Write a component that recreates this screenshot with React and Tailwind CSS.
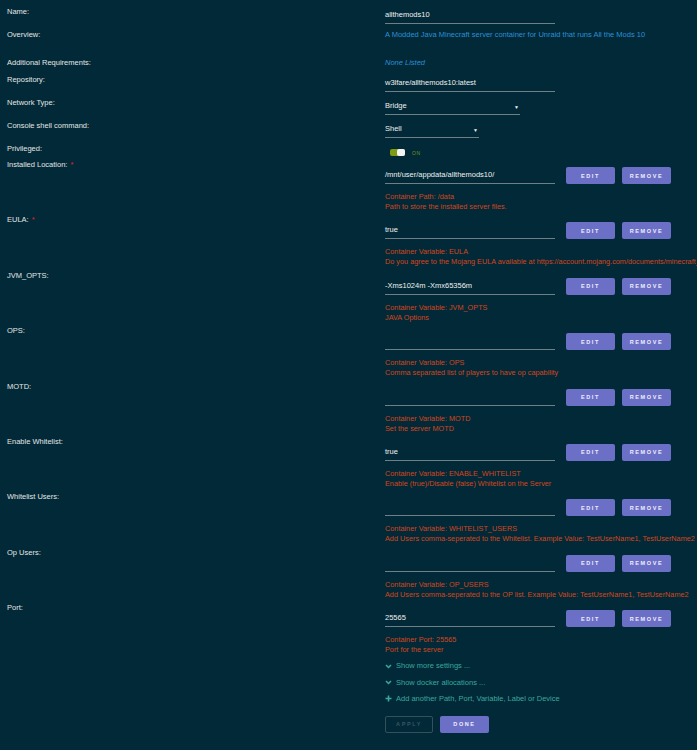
import React from 'react';

const font = { fontFamily: '"Liberation Sans", Arial, sans-serif' };

const variables = [
  {
    label: 'Installed Location:',
    required: true,
    value: '/mnt/user/appdata/allthemods10/',
    info: 'Container Path: /data',
    desc: 'Path to store the installed server files.',
  },
  {
    label: 'EULA:',
    required: true,
    value: 'true',
    info: 'Container Variable: EULA',
    desc: 'Do you agree to the Mojang EULA available at https://account.mojang.com/documents/minecraft_eula',
  },
  {
    label: 'JVM_OPTS:',
    value: '-Xms1024m -Xmx65356m',
    info: 'Container Variable: JVM_OPTS',
    desc: 'JAVA Options',
  },
  {
    label: 'OPS:',
    value: '',
    info: 'Container Variable: OPS',
    desc: 'Comma separated list of players to have op capability',
  },
  {
    label: 'MOTD:',
    value: '',
    info: 'Container Variable: MOTD',
    desc: 'Set the server MOTD',
  },
  {
    label: 'Enable Whitelist:',
    value: 'true',
    info: 'Container Variable: ENABLE_WHITELIST',
    desc: 'Enable (true)/Disable (false) Whitelist on the Server',
  },
  {
    label: 'Whitelist Users:',
    value: '',
    info: 'Container Variable: WHITELIST_USERS',
    desc: 'Add Users comma-seperated to the Whitelist. Example Value: TestUserName1, TestUserName2',
  },
  {
    label: 'Op Users:',
    value: '',
    info: 'Container Variable: OP_USERS',
    desc: 'Add Users comma-seperated to the OP list. Example Value: TestUserName1, TestUserName2',
  },
  {
    label: 'Port:',
    value: '25565',
    info: 'Container Port: 25565',
    desc: 'Port for the server',
  },
];

const Label = ({ children, required }) => (
  <div className="w-[385px] shrink-0 pl-[7px] text-[#e4e6e6]">
    {children}
    {required && <span className="ml-[3px] text-[#e0202a]">*</span>}
  </div>
);

const SmallButton = ({ children }) => (
  <button className="h-[17px] w-[49px] rounded-[2px] bg-[#6c6fc6] text-[5.5px] font-bold tracking-[1.6px] text-[#eef0ff]">
    {children}
  </button>
);

const SimpleRow = ({ label, value, width = 'w-[170px]', select, height }) => (
  <div className={`flex ${height}`}>
    <Label>{label}</Label>
    <div className={`relative mt-[3px] h-[14px] ${width} border-b border-[#6f7f86] text-[#eef0f0]`}>
      {value}
      {select && <span className="absolute right-[1px] top-[1px] text-[5px] text-[#eef0f0]">▼</span>}
    </div>
  </div>
);

const VariableRow = ({ v }) => (
  <div className="flex h-[55.4px]">
    <Label required={v.required}>{v.label}</Label>
    <div className="flex flex-col">
      <div className="mt-[7px] flex items-end">
        <div className="h-[14px] w-[170px] border-b border-[#6f7f86] text-[#eef0f0]">{v.value}</div>
        <div className="ml-[11px] flex gap-[7px]">
          <SmallButton>EDIT</SmallButton>
          <SmallButton>REMOVE</SmallButton>
        </div>
      </div>
      <div className="mt-[8px] text-[7.3px] text-[#d2461e]">{v.info}</div>
      <div className="text-[7.3px] text-[#d2461e]">{v.desc}</div>
    </div>
  </div>
);

const Chevron = () => (
  <svg width="7" height="5" viewBox="0 0 7 5" className="mr-[4px]">
    <path d="M1 1 L3.5 3.5 L6 1" stroke="#3aa89f" strokeWidth="1.5" fill="none" />
  </svg>
);

const Plus = () => (
  <svg width="7" height="7" viewBox="0 0 7 7" className="mr-[4px]">
    <path d="M3.5 0.5 V6.5 M0.5 3.5 H6.5" stroke="#3aa89f" strokeWidth="1.6" fill="none" />
  </svg>
);

export default function App() {
  return (
    <div
      style={font}
      className="h-[750px] w-[697px] overflow-hidden whitespace-nowrap bg-[#012937] pt-[7px] text-[7.5px] leading-[10px]"
    >
      <SimpleRow label="Name:" value="allthemods10" height="h-[23px]" />

      <div className="flex h-[28px]">
        <Label>Overview:</Label>
        <div className="text-[#2c8fd6]">A Modded Java Minecraft server container for Unraid that runs All the Mods 10</div>
      </div>

      <div className="flex h-[17px]">
        <Label>Additional Requirements:</Label>
        <div className="italic text-[#2c8fd6]">None Listed</div>
      </div>

      <SimpleRow label="Repository:" value="w3lfare/allthemods10:latest" height="h-[23px]" />
      <SimpleRow label="Network Type:" value="Bridge" width="w-[135px]" select height="h-[23px]" />
      <SimpleRow label="Console shell command:" value="Shell" width="w-[94px]" select height="h-[23px]" />

      <div className="flex h-[16px]">
        <Label>Privileged:</Label>
        <div className="mt-[1px] flex items-center">
          <div className="ml-[5px] flex h-[7px] w-[15px] items-center justify-end rounded-[2px] bg-[#7f9b12]">
            <div className="h-[7px] w-[8px] rounded-[2px] bg-[#f4f4f4]" />
          </div>
          <span className="ml-[7px] text-[5px] tracking-[0.5px] text-[#6f9a1e]">ON</span>
        </div>
      </div>

      {variables.map((v) => (
        <VariableRow key={v.label} v={v} />
      ))}

      <div className="ml-[385px] mt-[-1px] flex flex-col text-[#3aa89f]">
        <div className="flex h-[17px] items-center">
          <Chevron />
          Show more settings ...
        </div>
        <div className="flex h-[16px] items-center">
          <Chevron />
          Show docker allocations ...
        </div>
        <div className="flex h-[16px] items-center">
          <Plus />
          Add another Path, Port, Variable, Label or Device
        </div>
        <div className="mt-[9px] flex gap-[7px]">
          <button className="h-[17px] w-[48px] rounded-[2px] border border-[#34515b] text-[5.5px] font-bold tracking-[1.6px] text-[#3c5660]">
            APPLY
          </button>
          <SmallButton>DONE</SmallButton>
        </div>
      </div>
    </div>
  );
}
